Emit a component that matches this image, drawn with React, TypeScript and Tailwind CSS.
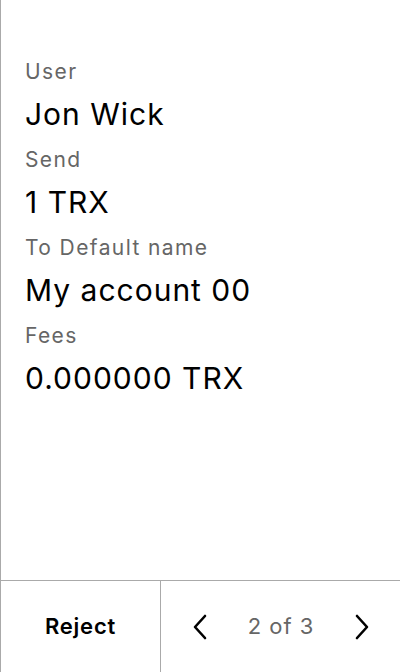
const rows = [
  { label: "User", value: "Jon Wick" },
  { label: "Send", value: "1 TRX" },
  { label: "To Default name", value: "My account 00" },
  { label: "Fees", value: "0.000000 TRX" },
];

function Chevron({ dir }: { dir: "left" | "right" }) {
  return (
    <svg width="16" height="26" viewBox="0 0 16 26" fill="none" stroke="currentColor" strokeWidth="2.6" strokeLinecap="round" strokeLinejoin="round">
      {dir === "left" ? <polyline points="13,2 3,13 13,24" /> : <polyline points="3,2 13,13 3,24" />}
    </svg>
  );
}

export default function App() {
  return (
    <div
      className="flex h-[672px] w-[400px] flex-col border-l border-[#aaaaaa] bg-white text-black"
      style={{ fontFamily: "Inter, 'Noto Sans', sans-serif" }}
    >
      <div className="flex flex-1 flex-col px-6 pt-[50px]">
        {rows.map((row) => (
          <div key={row.label} className="flex flex-col">
            <span className="-mb-[2px] text-[21px] leading-[44px] tracking-[1.4px] text-[#666666]">{row.label}</span>
            <span className="mb-[2px] text-[30px] leading-[44px] tracking-[1px]">{row.value}</span>
          </div>
        ))}
      </div>

      <div className="flex h-[92px] border-t border-[#aaaaaa]">
        <button className="flex w-[160px] items-center justify-center border-r border-[#aaaaaa] text-[22px] font-semibold tracking-[0.8px]">
          Reject
        </button>
        <div className="flex flex-1 items-center justify-between pl-[31px] pr-[30px]">
          <Chevron dir="left" />
          <span className="text-[22px] tracking-[1px] text-[#666666]">2 of 3</span>
          <Chevron dir="right" />
        </div>
      </div>
    </div>
  );
}
